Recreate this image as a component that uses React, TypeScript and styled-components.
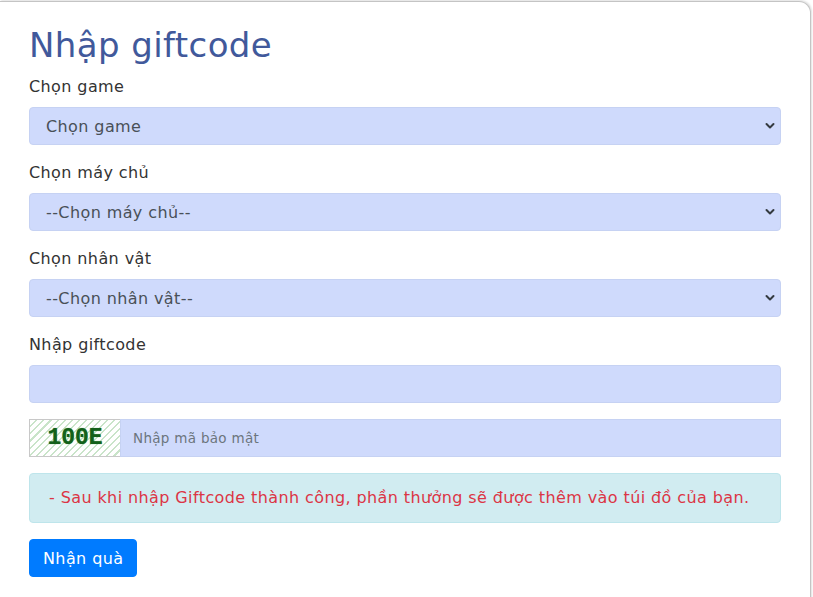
import styled, { createGlobalStyle } from "styled-components";

const GlobalStyle = createGlobalStyle`
  * {
    box-sizing: border-box;
  }
  body {
    margin: 0;
    background: #ffffff;
    font-family: "DejaVu Sans", "Noto Sans", sans-serif;
    font-size: 16px;
    line-height: 1.5;
    letter-spacing: 0.4px;
    color: #333333;
    overflow: hidden;
  }
`;

const Page = styled.div`
  width: 813px;
  height: 597px;
  padding-top: 1px;
  overflow: hidden;
`;

const Card = styled.div`
  width: 811px;
  min-height: 620px;
  background: #ffffff;
  border: 1px solid #c4c4c4;
  border-left: none;
  border-radius: 0 12px 0 0;
  box-shadow: 1px -1px 2px rgba(0, 0, 0, 0.12);
  padding: 22px 29px 0 29px;
`;

const Title = styled.h2`
  margin: 0 0 8px;
  font-size: 34px;
  font-weight: 400;
  line-height: 43px;
  letter-spacing: 0.4px;
  color: #41599b;
`;

const FormGroup = styled.div`
  margin-bottom: 16px;
`;

const Label = styled.label`
  display: block;
  margin-bottom: 8px;
  font-size: 16px;
  line-height: 24px;
  color: #333333;
`;

const SelectWrap = styled.div`
  position: relative;
`;

const Select = styled.select`
  display: block;
  width: 100%;
  height: 38px;
  padding: 0 32px 0 16px;
  appearance: none;
  background: #cfdafc;
  border: 1px solid #c6d2f3;
  border-radius: 4px;
  font-family: inherit;
  font-size: 16px;
  letter-spacing: 0.4px;
  color: #495057;
  outline: none;
`;

const Chevron = styled.svg`
  position: absolute;
  right: 6px;
  top: 15px;
  pointer-events: none;
`;

const TextInput = styled.input`
  display: block;
  width: 100%;
  height: 38px;
  padding: 0 12px;
  background: #cfdafc;
  border: 1px solid #c6d2f3;
  border-radius: 4px;
  font-family: inherit;
  font-size: 16px;
  color: #495057;
  outline: none;
`;

const CaptchaRow = styled.div`
  display: flex;
  height: 38px;
  margin-bottom: 16px;
`;

const Captcha = styled.div`
  flex: 0 0 91px;
  display: flex;
  align-items: center;
  justify-content: center;
  border: 1px solid #c8c8c8;
  border-right: none;
  background-color: #ffffff;
  background-image: repeating-linear-gradient(
    -45deg,
    #ffffff 0px,
    #ffffff 3.5px,
    #c9e4c9 3.5px,
    #c9e4c9 5px
  );
  font-family: "Liberation Mono", "DejaVu Sans Mono", monospace;
  font-weight: 700;
  font-size: 23px;
  letter-spacing: 0;
  color: #13601a;
  text-shadow: 0 0 1px #4a9a4a;
`;

const CaptchaInput = styled.input`
  flex: 1;
  min-width: 0;
  height: 38px;
  padding: 0 12px;
  background: #cfdafc;
  border: 1px solid #c6d2f3;
  font-family: inherit;
  font-size: 13.5px;
  letter-spacing: 0.3px;
  color: #495057;
  outline: none;
  &::placeholder {
    color: #6c757d;
  }
`;

const Alert = styled.div`
  padding: 12px 19px;
  margin-bottom: 16px;
  background: #d1ecf1;
  border: 1px solid #bee5eb;
  border-radius: 4px;
  font-size: 16px;
  line-height: 24px;
  color: #dc3545;
`;

const Button = styled.button`
  height: 38px;
  padding: 0 13px;
  background: #007bff;
  border: 1px solid #007bff;
  border-radius: 4px;
  font-family: inherit;
  font-size: 16px;
  letter-spacing: 0.4px;
  color: #ffffff;
  cursor: pointer;
`;

function ChevronIcon() {
  return (
    <Chevron width="10" height="8" viewBox="0 0 10 8">
      <path
        d="M1.5 2 L5 5.5 L8.5 2"
        fill="none"
        stroke="#343a40"
        strokeWidth="2"
        strokeLinecap="round"
        strokeLinejoin="round"
      />
    </Chevron>
  );
}

const selects = [
  { label: "Chọn game", placeholder: "Chọn game" },
  { label: "Chọn máy chủ", placeholder: "--Chọn máy chủ--" },
  { label: "Chọn nhân vật", placeholder: "--Chọn nhân vật--" },
];

export default function App() {
  return (
    <Page>
      <GlobalStyle />
      <Card>
        <Title>Nhập giftcode</Title>
        {selects.map((s) => (
          <FormGroup key={s.label}>
            <Label>{s.label}</Label>
            <SelectWrap>
              <Select defaultValue="">
                <option value="">{s.placeholder}</option>
              </Select>
              <ChevronIcon />
            </SelectWrap>
          </FormGroup>
        ))}
        <FormGroup>
          <Label>Nhập giftcode</Label>
          <TextInput type="text" />
        </FormGroup>
        <CaptchaRow>
          <Captcha>100E</Captcha>
          <CaptchaInput type="text" placeholder="Nhập mã bảo mật" />
        </CaptchaRow>
        <Alert>
          - Sau khi nhập Giftcode thành công, phần thưởng sẽ được thêm vào túi
          đồ của bạn.
        </Alert>
        <Button type="button">Nhận quà</Button>
      </Card>
    </Page>
  );
}
